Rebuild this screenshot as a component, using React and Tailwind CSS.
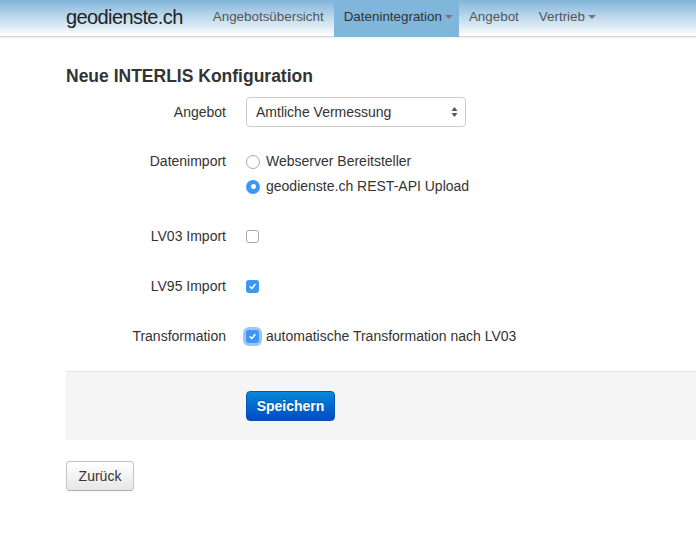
import React from 'react';

const font = { fontFamily: '"Liberation Sans", Arial, sans-serif' };

const Caret = () => (
  <span className="ml-[3px] inline-block h-0 w-0 border-x-[4px] border-t-[4px] border-x-transparent border-t-[#777] align-middle" />
);

const NavItem = ({ children, active, caret }) => (
  <div
    className={`flex h-[37px] items-center pb-[2px] pl-[10px] text-[13.4px] ${caret ? 'pr-[6px]' : 'pr-[10px]'} ${active ? 'bg-[#80b6da] text-[#333]' : 'text-[#555]'}`}
  >
    {children}
    {caret && <Caret />}
  </div>
);

const Checkbox = ({ checked, focus }) => (
  <span
    className={`inline-flex h-[13px] w-[13px] items-center justify-center rounded-[3px] ${checked ? 'bg-[#3d97f5]' : 'border border-[#aaa] bg-white'} ${focus ? 'ring-[3px] ring-[#9dc6f7]' : ''}`}
  >
    {checked && (
      <svg width="9" height="9" viewBox="0 0 9 9">
        <path d="M2 4.8 L3.8 6.5 L7 2.6" fill="none" stroke="white" strokeWidth="1.5" strokeLinecap="round" strokeLinejoin="round" />
      </svg>
    )}
  </span>
);

const Radio = ({ checked }) => (
  <span
    className={`inline-flex h-[14px] w-[14px] items-center justify-center rounded-full ${checked ? 'bg-[#3d97f5]' : 'border border-[#aaa] bg-white'}`}
  >
    {checked && <span className="h-[5px] w-[5px] rounded-full bg-white" />}
  </span>
);

const Row = ({ label, className = '', children }) => (
  <div className={`flex items-center ${className}`}>
    <div className="w-[160px] text-right text-[14px] text-[#333]">{label}</div>
    <div className="ml-[20px] flex items-center">{children}</div>
  </div>
);

export default function App() {
  return (
    <div className="min-h-[534px] bg-white" style={font}>
      <div className="h-[37px] border-b border-[#d4d4d4] bg-gradient-to-b from-[#81b5da] to-[#ffffff] shadow-[0_1px_2px_rgba(0,0,0,0.08)]">
        <div className="flex h-full items-center pl-[66px]">
          <div className="mr-[20px] pb-[2px] text-[20px] tracking-[-0.6px] text-[#222]">geodienste.ch</div>
          <NavItem>Angebotsübersicht</NavItem>
          <NavItem active caret>Datenintegration</NavItem>
          <NavItem>Angebot</NavItem>
          <NavItem caret>Vertrieb</NavItem>
        </div>
      </div>

      <div className="pl-[66px]">
        <h1 className="mt-[28px] text-[17.5px] font-bold leading-[22px] text-[#333]">Neue INTERLIS Konfiguration</h1>

        <Row label="Angebot" className="mt-[10px] h-[30px]">
          <div className="flex h-[30px] w-[220px] items-center justify-between rounded-[4px] border border-[#ccc] bg-white pl-[9px] pr-[7px] text-[14px] text-[#333]">
            <span>Amtliche Vermessung</span>
            <svg width="7" height="12" viewBox="0 0 7 12">
              <path d="M0.5 5 L3.5 1 L6.5 5 Z M0.5 7 L3.5 11 L6.5 7 Z" fill="#555" />
            </svg>
          </div>
        </Row>

        <div className="mt-[22px] flex items-start">
          <div className="flex h-[25px] w-[160px] items-center justify-end text-[14px] text-[#333]">Datenimport</div>
          <div className="ml-[20px] flex flex-col text-[14px] text-[#333]">
            <label className="flex h-[25px] items-center gap-[6px]">
              <Radio />
              Webserver Bereitsteller
            </label>
            <label className="flex h-[25px] items-center gap-[6px]">
              <Radio checked />
              geodienste.ch REST-API Upload
            </label>
          </div>
        </div>

        <Row label="LV03 Import" className="mt-[22px] h-[30px]">
          <Checkbox />
        </Row>

        <Row label="LV95 Import" className="mt-[20px] h-[30px]">
          <Checkbox checked />
        </Row>

        <Row label="Transformation" className="mt-[20px] h-[30px]">
          <Checkbox checked focus />
          <span className="ml-[7px] text-[14px] text-[#333]">automatische Transformation nach LV03</span>
        </Row>

        <div className="mt-[20px] h-[69px] border-t border-[#e5e5e5] bg-[#f5f5f5] pl-[180px] pt-[19px]">
          <button className="h-[30px] w-[89px] rounded-[4px] border border-[#0a52b8] bg-gradient-to-b from-[#0b88d6] to-[#0749c4] text-[14px] font-bold text-white [text-shadow:0_-1px_0_rgba(0,0,0,0.25)]">
            Speichern
          </button>
        </div>

        <button className="mt-[21px] h-[30px] w-[68px] rounded-[4px] border border-[#c5c5c5] border-b-[#b0b0b0] bg-gradient-to-b from-[#ffffff] to-[#e6e6e6] text-[14px] text-[#333] shadow-[0_1px_2px_rgba(0,0,0,0.05)]">
          Zurück
        </button>
      </div>
    </div>
  );
}
